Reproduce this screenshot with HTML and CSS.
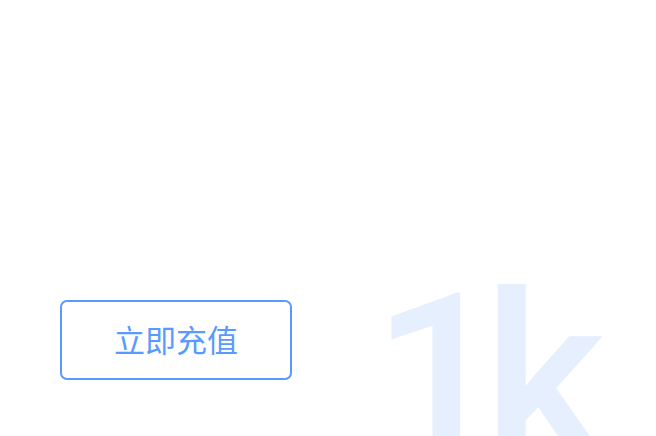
FILE: index.html
```html
<!DOCTYPE html>
<html lang="zh-CN">
<head>
<meta charset="utf-8">
<link rel="stylesheet" href="styles.css">
</head>
<body>
<div class="card">
  <div class="watermark" aria-hidden="true">1k</div>
  <button class="recharge">立即充值</button>
</div>
</body>
</html>
```
FILE: styles.css
```css
html, body {
  margin: 0;
  padding: 0;
  background: #ffffff;
}
.card {
  position: relative;
  width: 656px;
  height: 436px;
  overflow: hidden;
  display: flex;
  flex-direction: column;
  justify-content: flex-start;
  padding: 300px 0 0 60px;
  box-sizing: border-box;
}
.watermark {
  position: absolute;
  left: 372px;
  top: 263px;
  font-family: Roboto, "Liberation Sans", sans-serif;
  font-weight: 500;
  font-size: 235px;
  line-height: 1;
  color: #e6effd;
  letter-spacing: -22px;
  white-space: nowrap;
}
.recharge {
  position: relative;
  width: 232px;
  height: 80px;
  border: 2px solid #5a9aff;
  border-radius: 7px;
  background: #ffffff;
  color: #5a9aff;
  font-family: "Noto Sans CJK SC", "Noto Sans", sans-serif;
  font-size: 31px;
  line-height: 1;
  font-weight: 400;
  padding: 0 0 4px 0;
  cursor: pointer;
}
```
